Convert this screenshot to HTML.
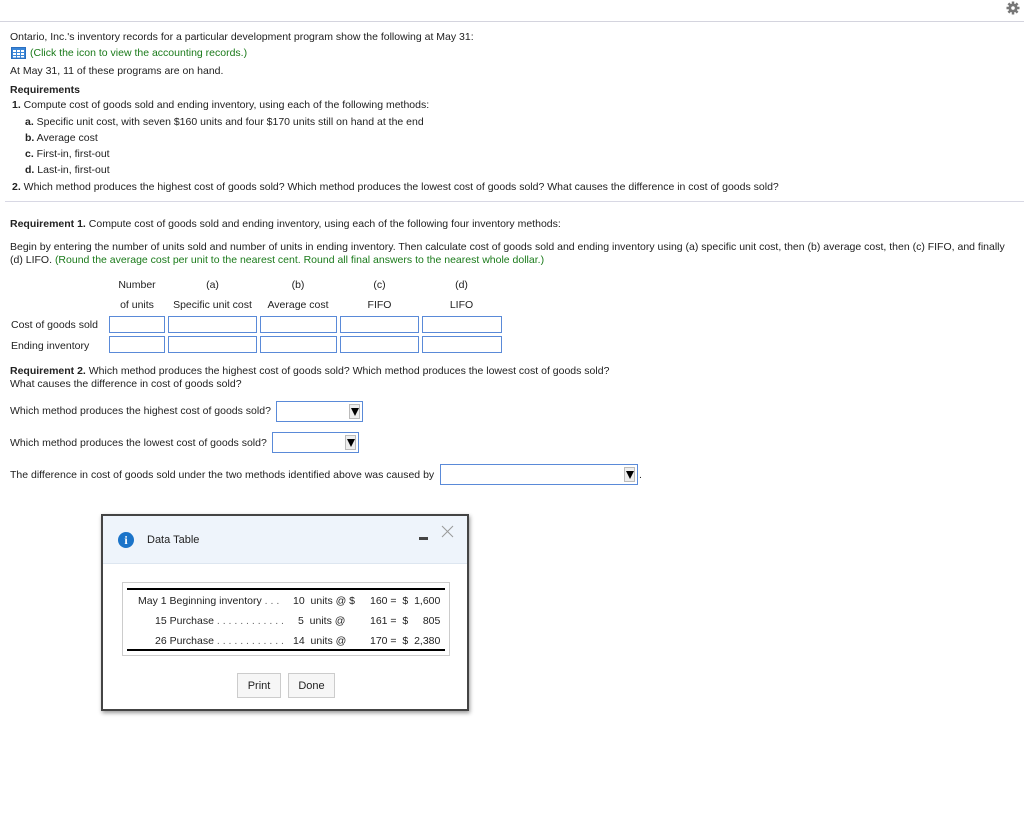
<!DOCTYPE html>
<html><head><meta charset="utf-8"><style>
*{margin:0;padding:0;box-sizing:border-box}
body{width:1024px;height:817px;background:#fff;position:relative;font-family:"Liberation Sans",Arial,sans-serif;font-size:10.5px;color:#222;overflow:hidden}
.a{position:absolute;white-space:nowrap;line-height:13px;margin-top:1px}
.g{color:#1a7a1a}
b{font-weight:bold}
.in{position:absolute;border:1px solid #5a8ad8;height:17px;background:#fff}
.dd{position:absolute;border:1px solid #5a8ad8;height:21px;background:#fff}
.dd i{position:absolute;right:2px;top:2px;width:11px;height:15px;background:#eee;border:1px solid #bbb}
.dd i:after{content:"";position:absolute;left:1px;top:3px;border-left:4px solid transparent;border-right:4px solid transparent;border-top:8px solid #000}
.c{text-align:center}
</style></head><body>
<div style="position:absolute;left:0;right:0;top:21px;height:1px;background:#d4d4de"></div>
<svg style="position:absolute;left:1006px;top:1px" width="14" height="14" viewBox="0 0 14 14"><circle cx="7" cy="7" r="4.5" fill="#777"/><g stroke="#777" stroke-width="2.5"><line x1="7" y1="0.5" x2="7" y2="13.5"/><line x1="0.5" y1="7" x2="13.5" y2="7"/><line x1="2.4" y1="2.4" x2="11.6" y2="11.6"/><line x1="11.6" y1="2.4" x2="2.4" y2="11.6"/></g><circle cx="7" cy="7" r="1.8" fill="#fff"/></svg>

<div class="a" style="left:10px;top:30px">Ontario, Inc.'s inventory records for a particular development program show the following at May 31:</div>
<svg style="position:absolute;left:11px;top:47px" width="15" height="12" viewBox="0 0 15 12"><rect x="0.5" y="0.5" width="14" height="11" fill="#3a86d8" stroke="#2a6fc0"/><g fill="#fff"><rect x="2" y="3" width="3" height="2"/><rect x="6" y="3" width="3" height="2"/><rect x="10" y="3" width="3" height="2"/><rect x="2" y="6" width="3" height="2"/><rect x="6" y="6" width="3" height="2"/><rect x="10" y="6" width="3" height="2"/><rect x="2" y="9" width="3" height="1.5"/><rect x="6" y="9" width="3" height="1.5"/><rect x="10" y="9" width="3" height="1.5"/></g></svg>
<div class="a g" style="left:30px;top:46px">(Click the icon to view the accounting records.)</div>
<div class="a" style="left:10px;top:64px">At May 31, 11 of these programs are on hand.</div>
<div class="a" style="left:10px;top:83px"><b>Requirements</b></div>
<div class="a" style="left:12px;top:98px"><b>1.</b> Compute cost of goods sold and ending inventory, using each of the following methods:</div>
<div class="a" style="left:25px;top:115px"><b>a.</b> Specific unit cost, with seven $160 units and four $170 units still on hand at the end</div>
<div class="a" style="left:25px;top:131px"><b>b.</b> Average cost</div>
<div class="a" style="left:25px;top:147px"><b>c.</b> First-in, first-out</div>
<div class="a" style="left:25px;top:163px"><b>d.</b> Last-in, first-out</div>
<div class="a" style="left:12px;top:180px"><b>2.</b> Which method produces the highest cost of goods sold? Which method produces the lowest cost of goods sold? What causes the difference in cost of goods sold?</div>
<div style="position:absolute;left:5px;right:0;top:201px;height:1px;background:#d8d8e4"></div>

<div class="a" style="left:10px;top:217px"><b>Requirement 1.</b> Compute cost of goods sold and ending inventory, using each of the following four inventory methods:</div>
<div class="a" style="left:10px;top:240px">Begin by entering the number of units sold and number of units in ending inventory. Then calculate cost of goods sold and ending inventory using (a) specific unit cost, then (b) average cost, then (c) FIFO, and finally</div>
<div class="a" style="left:10px;top:253px">(d) LIFO. <span class="g">(Round the average cost per unit to the nearest cent. Round all final answers to the nearest whole dollar.)</span></div>

<div class="a c" style="left:109px;width:56px;top:278px">Number</div>
<div class="a c" style="left:109px;width:56px;top:298px">of units</div>
<div class="a c" style="left:168px;width:89px;top:278px">(a)</div>
<div class="a c" style="left:168px;width:89px;top:298px">Specific unit cost</div>
<div class="a c" style="left:260px;width:76px;top:278px">(b)</div>
<div class="a c" style="left:260px;width:76px;top:298px">Average cost</div>
<div class="a c" style="left:340px;width:79px;top:278px">(c)</div>
<div class="a c" style="left:340px;width:79px;top:298px">FIFO</div>
<div class="a c" style="left:422px;width:79px;top:278px">(d)</div>
<div class="a c" style="left:422px;width:79px;top:298px">LIFO</div>
<div class="a" style="left:11px;top:318px">Cost of goods sold</div>
<div class="a" style="left:11px;top:339px">Ending inventory</div>
<div class="in" style="left:109px;width:56px;top:316px"></div><div class="in" style="left:168px;width:89px;top:316px"></div><div class="in" style="left:260px;width:77px;top:316px"></div><div class="in" style="left:340px;width:79px;top:316px"></div><div class="in" style="left:422px;width:80px;top:316px"></div>
<div class="in" style="left:109px;width:56px;top:336px"></div><div class="in" style="left:168px;width:89px;top:336px"></div><div class="in" style="left:260px;width:77px;top:336px"></div><div class="in" style="left:340px;width:79px;top:336px"></div><div class="in" style="left:422px;width:80px;top:336px"></div>

<div class="a" style="left:10px;top:364px"><b>Requirement 2.</b> Which method produces the highest cost of goods sold? Which method produces the lowest cost of goods sold?</div>
<div class="a" style="left:10px;top:377px">What causes the difference in cost of goods sold?</div>
<div class="a" style="left:10px;top:404px">Which method produces the highest cost of goods sold?</div>
<div class="dd" style="left:276px;width:87px;top:401px"><i></i></div>
<div class="a" style="left:10px;top:436px">Which method produces the lowest cost of goods sold?</div>
<div class="dd" style="left:272px;width:87px;top:432px"><i></i></div>
<div class="a" style="left:10px;top:468px">The difference in cost of goods sold under the two methods identified above was caused by</div>
<div class="dd" style="left:440px;width:198px;top:464px"><i></i></div>
<div class="a" style="left:639px;top:468px">.</div>

<div style="position:absolute;left:101px;top:514px;width:368px;height:197px;border:2px solid #444;background:#fff;box-shadow:1px 2px 4px rgba(0,0,0,.4)">
 <div style="position:absolute;left:0;right:0;top:0;height:48px;background:#eef4fb;border-bottom:1px solid #dde6f0"></div>
 <div style="position:absolute;left:15px;top:16px;width:16px;height:16px;border-radius:50%;background:#1b74c9;color:#fff;font:bold 12px 'Liberation Serif',serif;text-align:center;line-height:16px">i</div>
 <div class="a" style="left:44px;top:17px;font-size:11px">Data Table</div>
 <div style="position:absolute;left:316px;top:21px;width:9px;height:3px;background:#444"></div>
 <svg style="position:absolute;left:338px;top:9px" width="13" height="13"><path d="M1 1L12 12M12 1L1 12" stroke="#999" stroke-width="1"/></svg>
 <div style="position:absolute;left:19px;top:66px;width:328px;height:74px;border:1px solid #ccc">
  <div style="position:absolute;left:4px;right:4px;top:5px;height:2px;background:#000"></div>
  <div style="position:absolute;left:4px;right:4px;top:66px;height:2px;background:#000"></div>
  <div class="a" style="left:15px;top:11px">May 1 Beginning inventory <span style="color:#666">. . .</span></div>
  <div class="a" style="left:32px;top:31px">15 Purchase <span style="color:#666">. . . . . . . . . . . .</span></div>
  <div class="a" style="left:32px;top:51px">26 Purchase <span style="color:#666">. . . . . . . . . . . .</span></div>
  <div class="a" style="left:170px;top:11px">10 &nbsp;units @ $</div>
  <div class="a" style="left:175px;top:31px">5 &nbsp;units @</div>
  <div class="a" style="left:170px;top:51px">14 &nbsp;units @</div>
  <div class="a" style="left:247px;top:11px">160 = &nbsp;$ &nbsp;1,600</div>
  <div class="a" style="left:247px;top:31px">161 = &nbsp;$ &nbsp; &nbsp; 805</div>
  <div class="a" style="left:247px;top:51px">170 = &nbsp;$ &nbsp;2,380</div>
 </div>
 <div style="position:absolute;left:134px;top:157px;width:44px;height:25px;border:1px solid #ccc;background:#f6f6f6;text-align:center;line-height:24px;font-size:11px">Print</div>
 <div style="position:absolute;left:185px;top:157px;width:47px;height:25px;border:1px solid #ccc;background:#f6f6f6;text-align:center;line-height:24px;font-size:11px">Done</div>
</div>
</body></html>
